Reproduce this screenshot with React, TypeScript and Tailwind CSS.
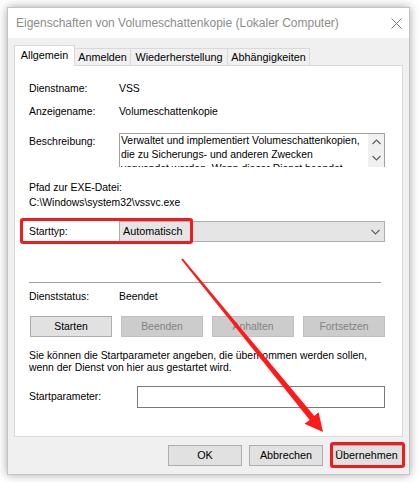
const FONT = "font-['Segoe_UI','Liberation_Sans',Arial,sans-serif]"

function Chevron({ dir = 'down', className = '' }: { dir?: 'up' | 'down'; className?: string }) {
  return (
    <svg width="9" height="6" viewBox="0 0 9 6" className={className}>
      <path
        d={dir === 'down' ? 'M0.5 1 L4.5 5 L8.5 1' : 'M0.5 5 L4.5 1 L8.5 5'}
        fill="none"
        stroke="#606060"
        strokeWidth="1.2"
      />
    </svg>
  )
}

function Button({
  label,
  disabled = false,
  className = '',
}: {
  label: string
  disabled?: boolean
  className?: string
}) {
  return (
    <div
      className={`flex h-[21px] items-center justify-center border ${
        disabled ? 'border-[#bfbfbf] bg-[#cccccc] text-[#838383]' : 'border-[#adadad] bg-[#e1e1e1] text-black'
      } ${className}`}
    >
      {label}
    </div>
  )
}

const tabs = [
  { label: 'Allgemein', width: 'w-[61px]', active: true },
  { label: 'Anmelden', width: 'w-[57px]', active: false },
  { label: 'Wiederherstellung', width: 'w-[98px]', active: false },
  { label: 'Abhängigkeiten', width: 'w-[83px]', active: false },
]

export default function App() {
  return (
    <div className={`relative h-[482px] w-[420px] overflow-hidden bg-white text-[10.4px] text-black ${FONT}`}>
      {/* dialog window */}
      <div className="ml-[7px] mt-[7px] flex h-[468px] w-[403px] flex-col border border-[#c4c4c4] bg-[#f0f0f0] shadow-[0_0_9px_rgba(0,0,0,0.35)]">
        {/* title bar */}
        <div className="flex h-[30px] items-center justify-between bg-white pl-[8px] pr-[7px]">
          <span className="text-[12px] text-[#8c8c8c]">
            Eigenschaften von Volumeschattenkopie (Lokaler Computer)
          </span>
          <svg width="11" height="11" viewBox="0 0 11 11">
            <path d="M0.5 0.5 L10.5 10.5 M10.5 0.5 L0.5 10.5" stroke="#7a7a7a" strokeWidth="1" />
          </svg>
        </div>

        <div className="flex flex-1 flex-col px-[6px] pt-[7px]">
          {/* tabs */}
          <div className="flex h-[20px] items-end">
            {tabs.map((tab, i) => (
              <div
                key={tab.label}
                className={`flex items-center justify-center whitespace-nowrap border border-b-0 border-[#d9d9d9] text-[10.8px] ${tab.width} ${
                  i > 0 ? '-ml-px' : ''
                } ${tab.active ? 'relative z-10 -mb-px h-[21px] bg-white pb-[2px]' : 'h-[17px] bg-[#f0f0f0]'}`}
              >
                {tab.label}
              </div>
            ))}
          </div>

          {/* panel */}
          <div className="flex h-[372px] flex-col border border-[#d9d9d9] bg-white pl-[14px] pr-[17px]">
            <div className="mt-[14px] flex h-[18px] items-center">
              <span className="w-[90px]">Dienstname:</span>
              <span>VSS</span>
            </div>
            <div className="mt-[5px] flex h-[18px] items-center">
              <span className="w-[90px]">Anzeigename:</span>
              <span>Volumeschattenkopie</span>
            </div>

            <div className="mt-[12px] flex h-[34px]">
              <span className="flex h-[18px] w-[90px] items-center">Beschreibung:</span>
              <div className="flex flex-1 overflow-hidden border-l border-r border-t border-[#a0a0a0]">
                <div className="h-[33px] flex-1 overflow-hidden whitespace-nowrap pl-px leading-[14px]">
                  Verwaltet und implementiert Volumeschattenkopien,
                  <br />
                  die zu Sicherungs- und anderen Zwecken
                  <br />
                  verwendet werden. Wenn dieser Dienst beendet
                </div>
                <div className="flex w-[16px] flex-col items-center bg-[#f0f0f0] pt-[5px]">
                  <Chevron dir="up" />
                  <Chevron dir="down" className="mt-[10px]" />
                </div>
              </div>
            </div>

            <div className="mt-[13px] leading-[15px]">
              <div>Pfad zur EXE-Datei:</div>
              <div>C:\Windows\system32\vssvc.exe</div>
            </div>

            <div className="mt-[11px] flex h-[21px] items-center">
              <span className="w-[90px]">Starttyp:</span>
              <div className="flex h-full flex-1 items-center justify-between border border-[#adadad] bg-[#e5e5e5] pl-[3px] pr-[4px]">
                <span className="text-[10.8px]">Automatisch</span>
                <Chevron />
              </div>
            </div>

            <div className="mr-[4px] mt-[40px] h-px bg-[#a0a0a0]" />

            <div className="mt-[6px] flex h-[16px] items-center">
              <span className="w-[90px]">Dienststatus:</span>
              <span>Beendet</span>
            </div>

            <div className="ml-px mt-[11px] grid grid-cols-4 gap-[9px]">
              <Button label="Starten" />
              <Button label="Beenden" disabled />
              <Button label="Anhalten" disabled />
              <Button label="Fortsetzen" disabled />
            </div>

            <div className="mt-[13px] whitespace-nowrap leading-[12px]">
              Sie können die Startparameter angeben, die übernommen werden sollen,
              <br />
              wenn der Dienst von hier aus gestartet wird.
            </div>

            <div className="mt-[12px] flex h-[22px] items-center">
              <span className="w-[108px]">Startparameter:</span>
              <div className="h-full flex-1 border border-[#7a7a7a] bg-white" />
            </div>
          </div>

          {/* dialog buttons */}
          <div className="mt-[8px] flex justify-end gap-[7px] text-[10.8px]">
            <Button label="OK" className="w-[74px]" />
            <Button label="Abbrechen" className="w-[74px]" />
            <Button label="Übernehmen" className="w-[73px]" />
          </div>
        </div>
      </div>

      {/* annotations */}
      <div className="pointer-events-none absolute left-[20px] top-[218px] h-[26px] w-[173px] rounded-[3px] border-[3px] border-[#ee1d1d]" />
      <div className="pointer-events-none absolute left-[330px] top-[442px] h-[26px] w-[75px] rounded-[3px] border-[3px] border-[#ee1d1d]" />
      <svg className="pointer-events-none absolute left-0 top-0" width="420" height="482" viewBox="0 0 420 482">
        <polygon
          points="182.8,258.4 181.2,259.6 309.7,419.9 304.6,423.7 323,432 318.6,412.3 314.3,416.1"
          fill="#ff1a1a"
        />
      </svg>
    </div>
  )
}
